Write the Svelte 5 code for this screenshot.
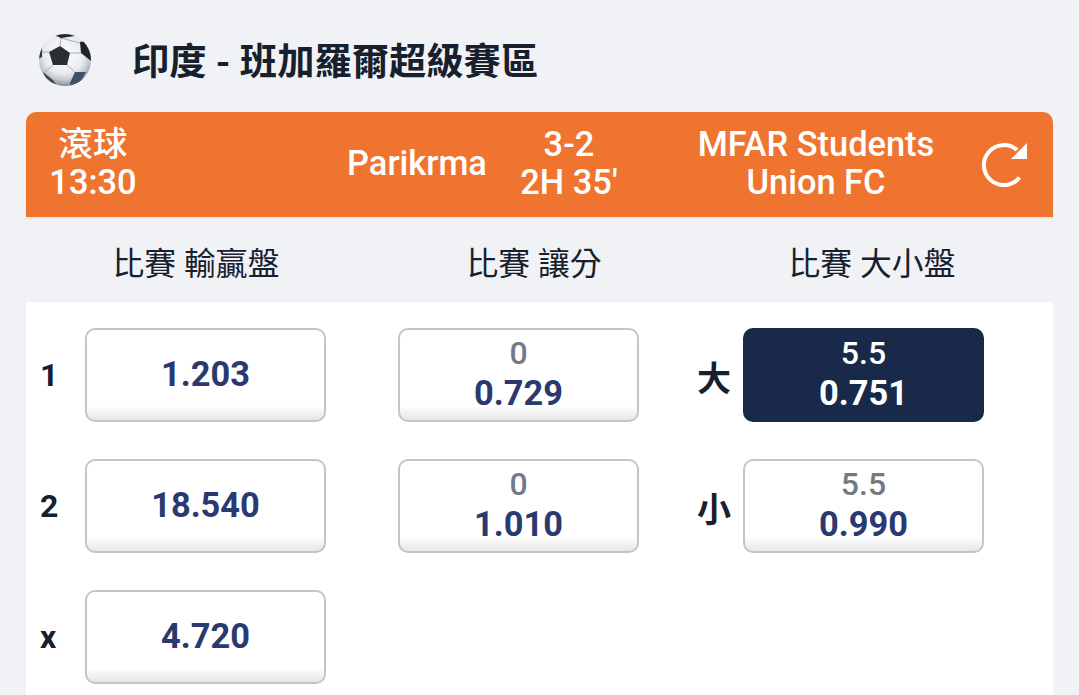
<script>
	const columns = [
		{
			title: '比賽 輸贏盤',
			kind: 'result',
			rows: [
				{ label: '1', price: '1.203' },
				{ label: '2', price: '18.540' },
				{ label: 'x', price: '4.720' }
			]
		},
		{
			title: '比賽 讓分',
			kind: 'handicap',
			rows: [
				{ line: '0', price: '0.729' },
				{ line: '0', price: '1.010' }
			]
		},
		{
			title: '比賽 大小盤',
			kind: 'total',
			rows: [
				{ label: '大', line: '5.5', price: '0.751', active: true },
				{ label: '小', line: '5.5', price: '0.990' }
			]
		}
	];
</script>

<div class="page">
	<div class="league">
		<svg class="ball" width="56" height="56" viewBox="0 0 56 56" aria-hidden="true">
			<defs>
				<radialGradient id="ballShade" cx="48%" cy="38%" r="62%">
					<stop offset="0%" stop-color="#ffffff" />
					<stop offset="62%" stop-color="#e9ebee" />
					<stop offset="86%" stop-color="#bcc0c5" />
					<stop offset="100%" stop-color="#7f858b" />
				</radialGradient>
				<clipPath id="ballClip"><circle cx="28" cy="28" r="26" /></clipPath>
			</defs>
			<circle cx="28" cy="28" r="26" fill="url(#ballShade)" />
			<g clip-path="url(#ballClip)">
				<path d="M23 14 L24 6 M33 21 L44 21 M12 20 L5 20 M16 33 L7 41 M30 33 L38 40 M16 48 L33 51 M24 6 L43 11" stroke="#a9aeb4" stroke-width="1" fill="none" />
				<path d="M12 20 L23 14 L33 21 L30 33 L16 33 Z" fill="#2b2f33" />
				<path d="M17 3 L26 1 L39 3 L38 4 L24 6 Z" fill="#24282c" />
				<path d="M43 10 L49 9 L56 23 L54 29 L44 21 Z" fill="#1f2326" />
				<path d="M5 14 L1 27 L5 25 Z" fill="#33383d" />
				<path d="M6 40 L16 48 L21 55 L11 52 Z" fill="#3d4955" />
				<path d="M38 40 L49 40 L44 49 L33 56 L33 51 Z" fill="#3f5166" />
			</g>
		</svg>
		<h1>印度 - 班加羅爾超級賽區</h1>
	</div>

	<div class="match">
		<div class="time"><span>滾球</span><span>13:30</span></div>
		<div class="home">Parikrma</div>
		<div class="score"><span>3-2</span><span>2H 35'</span></div>
		<div class="away"><span>MFAR Students</span><span>Union FC</span></div>
		<svg class="refresh" width="50" height="50" viewBox="0 0 50 50" aria-label="refresh">
			<path d="M36 10 A20 20 0 1 0 38.5 37.6" fill="none" stroke="#fff" stroke-width="4" />
			<path d="M46 3 V19 H30 Z" fill="#fff" />
		</svg>
	</div>

	<div class="titles">
		{#each columns as col}
			<div>{col.title}</div>
		{/each}
	</div>

	<div class="panel">
		{#each columns as col}
			<div class="col {col.kind}">
				{#each col.rows as row}
					<div class="row">
						{#if row.label}<span class="label">{row.label}</span>{/if}
						<button class="odd" class:active={row.active}>
							{#if row.line}<span class="line">{row.line}</span>{/if}
							<span class="price">{row.price}</span>
						</button>
					</div>
				{/each}
			</div>
		{/each}
	</div>
</div>

<style>
	:global(body) {
		background: #f0f2f6;
		overflow: hidden;
	}

	.page {
		height: 695px;
		overflow: hidden;
		font-family: Roboto, 'Noto Sans CJK TC', sans-serif;
		color: #17202c;
	}

	.league {
		display: flex;
		align-items: center;
		height: 112px;
		padding-left: 37px;
		box-sizing: border-box;
	}

	.ball {
		margin-right: 39px;
		margin-top: 8px;
	}

	h1 {
		margin: 6px 0 0;
		font-size: 37.3px;
		font-weight: 700;
	}

	.match {
		display: flex;
		align-items: center;
		height: 107px;
		margin: 0 26px;
		padding-bottom: 3px;
		background: #ef7430;
		border-bottom: 2px solid #e4e6ea;
		border-radius: 10px 10px 0 0;
		box-sizing: border-box;
		color: #fff;
		font-size: 34.4px;
		font-weight: 500;
		line-height: 38px;
		text-align: center;
		white-space: nowrap;
	}

	.match span {
		display: block;
	}

	.time {
		width: 134px;
		flex: none;
	}

	.home {
		width: 140px;
		margin-left: 187px;
		flex: none;
	}

	.score {
		width: 130px;
		margin-left: 17px;
		flex: none;
	}

	.away {
		width: 260px;
		margin-left: 52px;
		flex: none;
	}

	.refresh {
		margin-left: 35px;
		margin-top: 4px;
		flex: none;
	}

	.titles {
		display: grid;
		grid-template-columns: repeat(3, 338px);
		align-items: center;
		height: 83px;
		margin-left: 27px;
		padding-top: 1px;
		box-sizing: border-box;
		font-size: 31.8px;
		text-align: center;
	}

	.panel {
		display: grid;
		grid-template-columns: 332px 338px 1fr;
		height: 400px;
		margin: 0 26px;
		background: #fff;
	}

	.col {
		display: flex;
		flex-direction: column;
		gap: 37px;
		padding-top: 26px;
	}

	.row {
		display: flex;
		align-items: center;
		height: 94px;
	}

	.label {
		font-size: 32px;
		font-weight: 700;
	}

	.result .row {
		padding-left: 14px;
	}

	.result .label {
		width: 45px;
	}

	.handicap .row {
		padding-left: 40px;
	}

	.total .row {
		padding-left: 1px;
	}

	.total .label {
		width: 46px;
		font-size: 34px;
		margin-top: 2px;
	}

	.odd {
		display: flex;
		flex-direction: column;
		align-items: center;
		justify-content: center;
		width: 241px;
		height: 94px;
		padding: 0 0 3px;
		background: linear-gradient(#fff 84%, #e6e6e6);
		border: 2px solid #c4c5c7;
		border-radius: 10px;
		box-sizing: border-box;
		font-family: inherit;
		color: #2a3a70;
		font-size: 34.4px;
		font-weight: 700;
		line-height: 38px;
	}

	.line {
		margin-bottom: 3px;
		color: #737a84;
		font-size: 32px;
		font-weight: 500;
		line-height: 36px;
	}

	.odd.active {
		background: #19294a;
		border-color: #19294a;
		color: #fff;
	}

	.odd.active .line {
		color: #fff;
	}
</style>
